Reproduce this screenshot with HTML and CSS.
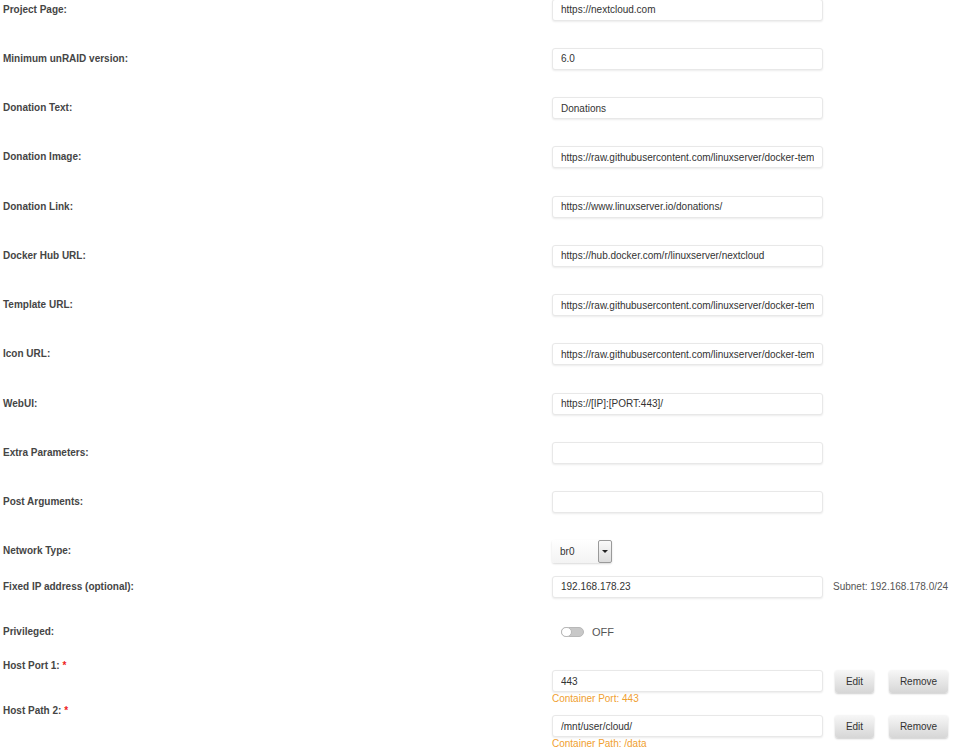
FILE: index.html
```html
<!DOCTYPE html>
<html lang="en">
<head>
    <meta charset="UTF-8">
    <meta name="viewport" content="width=device-width, initial-scale=1.0">
    <title>Update Container</title>
    <link rel="stylesheet" href="styles.css">
</head>
<body>
    <div class="settings">
        <!-- Template info -->
        <div class="row">
            <div class="label">Project Page:</div>
            <div class="field"><input class="text" type="text" value="https://nextcloud.com"></div>
        </div>
        <div class="row">
            <div class="label">Minimum unRAID version:</div>
            <div class="field"><input class="text" type="text" value="6.0"></div>
        </div>
        <div class="row">
            <div class="label">Donation Text:</div>
            <div class="field"><input class="text" type="text" value="Donations"></div>
        </div>
        <div class="row">
            <div class="label">Donation Image:</div>
            <div class="field"><input class="text" type="text" value="https://raw.githubusercontent.com/linuxserver/docker-templates/master/linuxserver.io/img/donate.png"></div>
        </div>
        <div class="row">
            <div class="label">Donation Link:</div>
            <div class="field"><input class="text" type="text" value="https://www.linuxserver.io/donations/"></div>
        </div>
        <div class="row">
            <div class="label">Docker Hub URL:</div>
            <div class="field"><input class="text" type="text" value="https://hub.docker.com/r/linuxserver/nextcloud"></div>
        </div>
        <div class="row">
            <div class="label">Template URL:</div>
            <div class="field"><input class="text" type="text" value="https://raw.githubusercontent.com/linuxserver/docker-templates/master/linuxserver.io/nextcloud.xml"></div>
        </div>
        <div class="row">
            <div class="label">Icon URL:</div>
            <div class="field"><input class="text" type="text" value="https://raw.githubusercontent.com/linuxserver/docker-templates/master/linuxserver.io/img/nextcloud-icon.png"></div>
        </div>
        <div class="row">
            <div class="label">WebUI:</div>
            <div class="field"><input class="text" type="text" value="https://[IP]:[PORT:443]/"></div>
        </div>
        <div class="row">
            <div class="label">Extra Parameters:</div>
            <div class="field"><input class="text" type="text" value=""></div>
        </div>
        <div class="row">
            <div class="label">Post Arguments:</div>
            <div class="field"><input class="text" type="text" value=""></div>
        </div>

        <!-- Network -->
        <div class="row row-net">
            <div class="label">Network Type:</div>
            <div class="field">
                <div class="select">
                    <span class="select-value">br0</span>
                    <span class="select-btn"><span class="caret"></span></span>
                </div>
            </div>
        </div>
        <div class="row row-ip">
            <div class="label">Fixed IP address (optional):</div>
            <div class="field">
                <input class="text" type="text" value="192.168.178.23">
                <span class="note">Subnet: 192.168.178.0/24</span>
            </div>
        </div>
        <div class="row row-priv">
            <div class="label">Privileged:</div>
            <div class="field">
                <span class="switch"><span class="knob"></span></span>
                <span class="switch-text">OFF</span>
            </div>
        </div>

        <!-- Ports and paths -->
        <div class="row row-config">
            <div class="label">Host Port 1: <span class="req">*</span></div>
            <div class="field">
                <div class="config-line">
                    <input class="text" type="text" value="443">
                    <button class="btn btn-edit">Edit</button>
                    <button class="btn btn-remove">Remove</button>
                </div>
                <div class="hint">Container Port: 443</div>
            </div>
        </div>
        <div class="row row-config">
            <div class="label">Host Path 2: <span class="req">*</span></div>
            <div class="field">
                <div class="config-line">
                    <input class="text" type="text" value="/mnt/user/cloud/">
                    <button class="btn btn-edit">Edit</button>
                    <button class="btn btn-remove">Remove</button>
                </div>
                <div class="hint">Container Path: /data</div>
            </div>
        </div>
    </div>
</body>
</html>
```

FILE: styles.css
```css
body {
    margin: 0;
    padding: 0 0 0 3px;
    font-family: "Liberation Sans", Arial, sans-serif;
    font-size: 10px;
    color: #333;
    background-color: #fff;
    overflow: hidden;
}
.settings {
    margin-top: -1.5px;
}
.row {
    display: flex;
    align-items: center;
    height: 22px;
    margin-bottom: 27.25px;
}
.label {
    width: 549px;
    flex-shrink: 0;
    font-weight: bold;
    font-size: 10px;
    line-height: 12px;
    color: #454545;
}
.req {
    color: #e22;
}
.field {
    display: flex;
    align-items: center;
}
input.text {
    box-sizing: border-box;
    width: 271px;
    height: 22px;
    margin: 0;
    padding: 0 8px;
    font-family: "Liberation Sans", Arial, sans-serif;
    font-size: 10px;
    color: #333;
    background-color: #fff;
    border: 1px solid #e8e8e8;
    border-radius: 3px;
    box-shadow: 0 1px 2px rgba(0, 0, 0, 0.08);
    outline: none;
}
.note {
    margin-left: 10px;
    color: #555;
}

/* Network dropdown */
.row-net {
    margin-bottom: 13.5px;
}
.select {
    display: flex;
    align-items: stretch;
    width: 60px;
    height: 23px;
    box-sizing: border-box;
    background: linear-gradient(#fff, #f3f3f3);
    border-radius: 2px;
    box-shadow: 0 1px 2px rgba(0, 0, 0, 0.15);
}
.select-value {
    flex: 1;
    display: flex;
    align-items: center;
    padding-left: 8px;
    color: #333;
}
.select-btn {
    width: 14px;
    box-sizing: border-box;
    display: flex;
    align-items: center;
    justify-content: center;
    border: 1px solid #9a9a9a;
    border-radius: 2px;
    background: linear-gradient(#fafafa, #dcdcdc);
}
.caret {
    width: 0;
    height: 0;
    border-left: 3px solid transparent;
    border-right: 3px solid transparent;
    border-top: 3px solid #222;
}

.row-ip {
    margin-bottom: 23px;
}

/* Privileged toggle */
.row-priv {
    margin-bottom: 17px;
}
.switch {
    position: relative;
    display: inline-block;
    width: 23px;
    height: 10px;
    margin-left: 9px;
    box-sizing: border-box;
    background-color: #c8c8c8;
    border: 1px solid #b8b8b8;
    border-radius: 6px;
}
.knob {
    position: absolute;
    left: -1px;
    top: -1px;
    width: 11px;
    height: 10px;
    box-sizing: border-box;
    background-color: #fff;
    border: 1px solid #b8b8b8;
    border-radius: 6px;
}
.switch-text {
    margin-left: 8px;
    font-size: 11px;
    color: #555;
}

/* Host port / path entries */
.row-config {
    align-items: flex-start;
    height: auto;
    margin-bottom: 0;
}
.row-config .field {
    display: block;
    padding-top: 10px;
}
.config-line {
    display: flex;
    align-items: center;
}
.btn {
    height: 23px;
    margin: 0;
    padding: 0;
    font-family: "Liberation Sans", Arial, sans-serif;
    font-size: 10px;
    color: #333;
    background: linear-gradient(#f7f7f7, #d6d6d6);
    border: none;
    border-radius: 3px;
    box-shadow: 0 1px 2px rgba(0, 0, 0, 0.2);
    cursor: pointer;
}
.btn-edit {
    width: 39px;
    margin-left: 12px;
}
.btn-remove {
    width: 59px;
    margin-left: 15px;
}
.hint {
    line-height: 12px;
    color: #f0a030;
}
```
